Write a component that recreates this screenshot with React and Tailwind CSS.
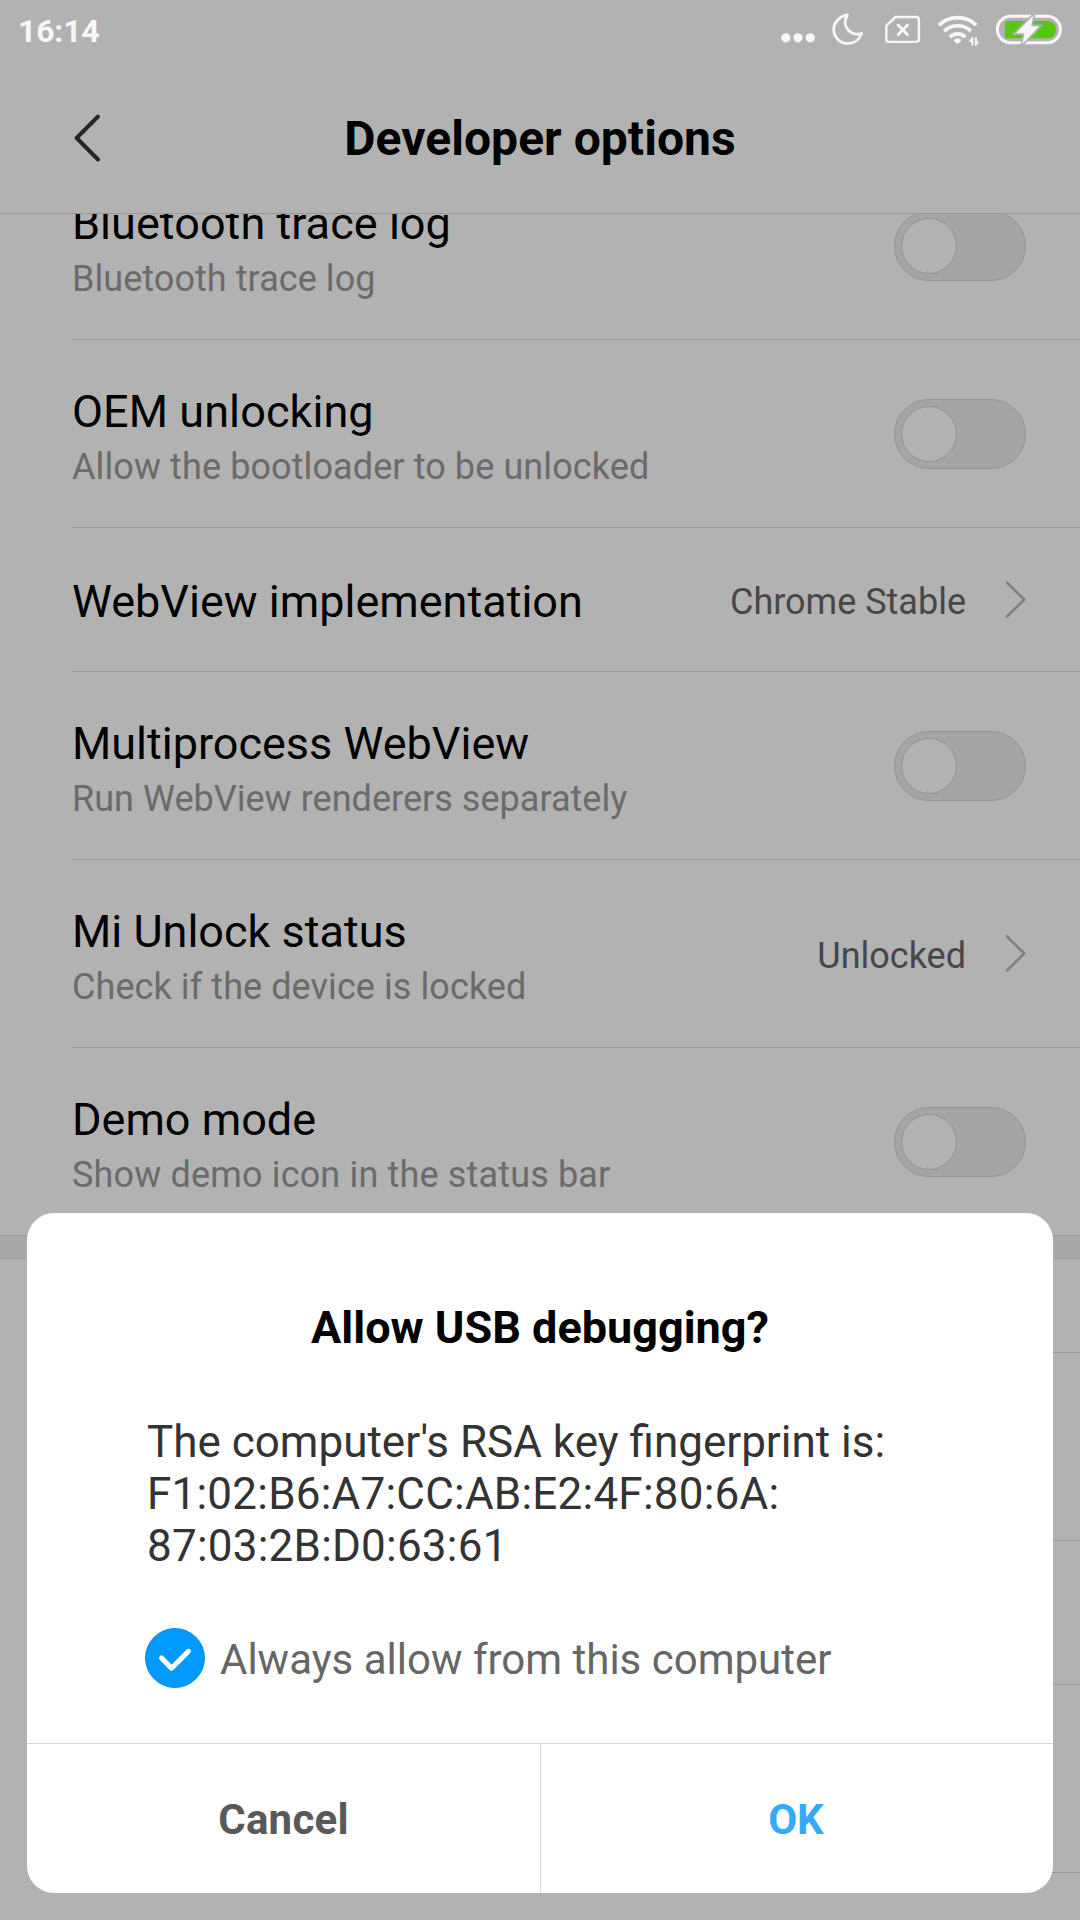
function StatusIcons() {
  return (
    <svg width="320" height="60" viewBox="0 0 320 60" fill="none" aria-hidden="true">
      <g fill="#f7f7f7">
        <circle cx="25.8" cy="37.8" r="4.6" />
        <circle cx="38" cy="37.8" r="4.6" />
        <circle cx="50.3" cy="37.8" r="4.6" />
      </g>
      <path
        d="M87.4 15C79.3 16.3 73.7 22.5 73.7 29.6C73.7 37.3 80 43.4 87.7 43.4C94.5 43.4 99.8 39.4 101.7 33.4C91.5 36.4 80.5 27.5 87.4 15Z"
        stroke="#f7f7f7"
        strokeWidth="2.8"
        strokeLinejoin="round"
      />
      <path
        d="M135.5 17H156.3Q158.9 17 158.9 19.6V39.3Q158.9 41.9 156.3 41.9H128.9Q126.3 41.9 126.3 39.3V25.6Z"
        stroke="#f7f7f7"
        strokeWidth="2.4"
        strokeLinejoin="round"
      />
      <path d="M138 25L147.6 34.8M147.6 25L138 34.8" stroke="#f7f7f7" strokeWidth="2.7" strokeLinecap="round" />
      <g stroke="#f7f7f7" strokeWidth="3.7">
        <path d="M179 25.2A27 27 0 0 1 216.3 25.2" />
        <path d="M184.3 31.1A19.3 19.3 0 0 1 211 31.1" />
        <path d="M189.9 37A11.2 11.2 0 0 1 205.4 37" />
      </g>
      <path d="M193.7 40.2Q197.5 36.4 201.3 40.2Q200.5 42.6 197.5 44Q194.5 42.6 193.7 40.2Z" fill="#f7f7f7" />
      <path d="M208.5 42L212.2 37H213.3V45.6H211.3V42ZM214.9 37.2H217V41.4H219.3L216 46H214.9Z" fill="#f7f7f7" />
      <rect x="237.4" y="16.2" width="63" height="26.6" rx="13.3" stroke="#f7f7f7" strokeWidth="3" />
      <path d="M245 23Q245 20.9 248 20.9H287.5Q296 21.5 296 29.4Q296 37.6 287.5 38.3H248Q245 38.3 245 36Z" fill="#56c811" />
      <path
        d="M273.2 15.6L256 33.2H264.4L262.4 44L279.2 26.2H271.2Z"
        fill="#f7f7f7"
        stroke="#b2b2b2"
        strokeWidth="3.6"
        paintOrder="stroke"
      />
    </svg>
  );
}

function Switch() {
  return (
    <div className="flex h-[70px] w-[132px] shrink-0 items-center rounded-full border border-[#939393] bg-[#a5a5a5] px-[6px]">
      <div className="h-[56px] w-[56px] rounded-full border border-[#939393] bg-[#b2b2b2]" />
    </div>
  );
}

function Chevron() {
  return (
    <svg className="ml-[39px] shrink-0" width="21" height="37" viewBox="0 0 21 37" fill="none" aria-hidden="true">
      <path d="M2 1.5L19.3 18.5L2 35.5" stroke="#808080" strokeWidth="2.6" strokeLinecap="round" strokeLinejoin="round" />
    </svg>
  );
}

function Row({ title, titleClass = "", detail, detailClass = "", value, last = false }) {
  return (
    <div
      className={`ml-[72px] flex shrink-0 items-center pr-[54px] ${
        last ? "h-[187px]" : detail ? "h-[188px] border-b border-[#979797]" : "h-[144px] border-b border-[#979797]"
      }`}
    >
      <div className="flex-1">
        <div className={`text-[45px] leading-[53px] text-black ${detail ? "mt-[6px]" : "mt-[4px]"} ${titleClass}`}>
          {title}
        </div>
        {detail && (
          <div className={`mt-[8px] text-[36px] leading-[42px] text-[#6b6b6b] ${detailClass}`}>{detail}</div>
        )}
      </div>
      {value && <div className="mt-[5px] text-[36px] leading-[42px] text-[#474747]">{value}</div>}
      {value ? <Chevron /> : <Switch />}
    </div>
  );
}

function Dialog() {
  return (
    <div className="absolute inset-x-[27px] top-[1213px] flex h-[680px] flex-col overflow-hidden rounded-[27px] bg-white">
      <h2 className="mt-[88px] text-center text-[45px] leading-[53px] font-bold text-black">Allow USB debugging?</h2>
      <p className="mt-[62px] ml-[120px] text-[44px] leading-[52px] text-[#333333]">
        The computer&apos;s RSA key fingerprint is:
        <br />
        <span className="tracking-[0.22px]">
          F1:02:B6:A7:CC:AB:E2:4F:80:6A:
          <br />
          87:03:2B:D0:63:61
        </span>
      </p>
      <label className="mt-[56px] ml-[118px] flex items-center">
        <svg width="60" height="60" viewBox="0 0 60 60" fill="none" aria-hidden="true">
          <circle cx="30" cy="30" r="29.5" fill="#0099ff" stroke="#148fe2" />
          <path d="M16.5 30L26.5 40.3L43.5 23.3" stroke="white" strokeWidth="5" strokeLinecap="round" strokeLinejoin="round" />
        </svg>
        <span className="mt-[4px] ml-[15px] text-[42px] leading-[50px] text-[#666666]">Always allow from this computer</span>
      </label>
      <div className="mt-auto flex h-[150px] border-t border-[#d8d8d8] text-[42px] font-bold">
        <button className="w-[514px] border-r border-[#d8d8d8] pt-[1px] tracking-[0.25px] text-[#595959]">Cancel</button>
        <button className="flex-1 pt-[1px] pr-[2px] text-[#33aaff]">OK</button>
      </div>
    </div>
  );
}

export default function App() {
  return (
    <div className="relative flex h-[1920px] w-[1080px] flex-col overflow-hidden bg-[#b2b2b2] font-['Roboto',sans-serif]">
      <div className="flex h-[60px] shrink-0 justify-between">
        <span className="mt-[12px] ml-[18px] text-[32px] leading-[38px] font-bold tracking-[-0.2px] text-[#f7f7f7]">16:14</span>
        <StatusIcons />
      </div>
      <header className="flex h-[154px] shrink-0 items-center border-b border-[#979797]">
        <svg className="ml-[72px] shrink-0" width="32" height="52" viewBox="0 0 32 52" fill="none" aria-hidden="true">
          <path d="M26 5.5L4.6 27L26 48.5" stroke="#262626" strokeWidth="4" strokeLinecap="round" strokeLinejoin="round" />
        </svg>
        <h1 className="mr-[104px] flex-1 pt-[5px] text-center text-[48px] leading-[56px] font-bold tracking-[0.04px] text-black">
          Developer options
        </h1>
      </header>
      <main className="flex flex-1 flex-col overflow-hidden">
        <div className="-mt-[62px] flex flex-col">
          <Row
            title="Bluetooth trace log"
            titleClass="tracking-[0.05px]"
            detail="Bluetooth trace log"
            detailClass="tracking-[0.06px]"
          />
          <Row
            title="OEM unlocking"
            titleClass="tracking-[0.08px]"
            detail="Allow the bootloader to be unlocked"
            detailClass="tracking-[0.1px]"
          />
          <Row title="WebView implementation" value="Chrome Stable" />
          <Row title="Multiprocess WebView" detail="Run WebView renderers separately" detailClass="tracking-[0.03px]" />
          <Row
            title="Mi Unlock status"
            detail="Check if the device is locked"
            detailClass="tracking-[0.08px]"
            value="Unlocked"
          />
          <Row title="Demo mode" detail="Show demo icon in the status bar" detailClass="tracking-[0.16px]" last />
        </div>
        <div className="h-[24px] shrink-0 border-y border-[#9c9c9c] bg-[#a9a9a9]" />
        <div className="ml-[72px] h-[94px] shrink-0 border-b border-[#979797]" />
        <div className="ml-[72px] h-[188px] shrink-0 border-b border-[#979797]" />
        <div className="ml-[72px] h-[144px] shrink-0 border-b border-[#979797]" />
        <div className="ml-[72px] h-[188px] shrink-0 border-b border-[#979797]" />
      </main>
      <Dialog />
    </div>
  );
}
